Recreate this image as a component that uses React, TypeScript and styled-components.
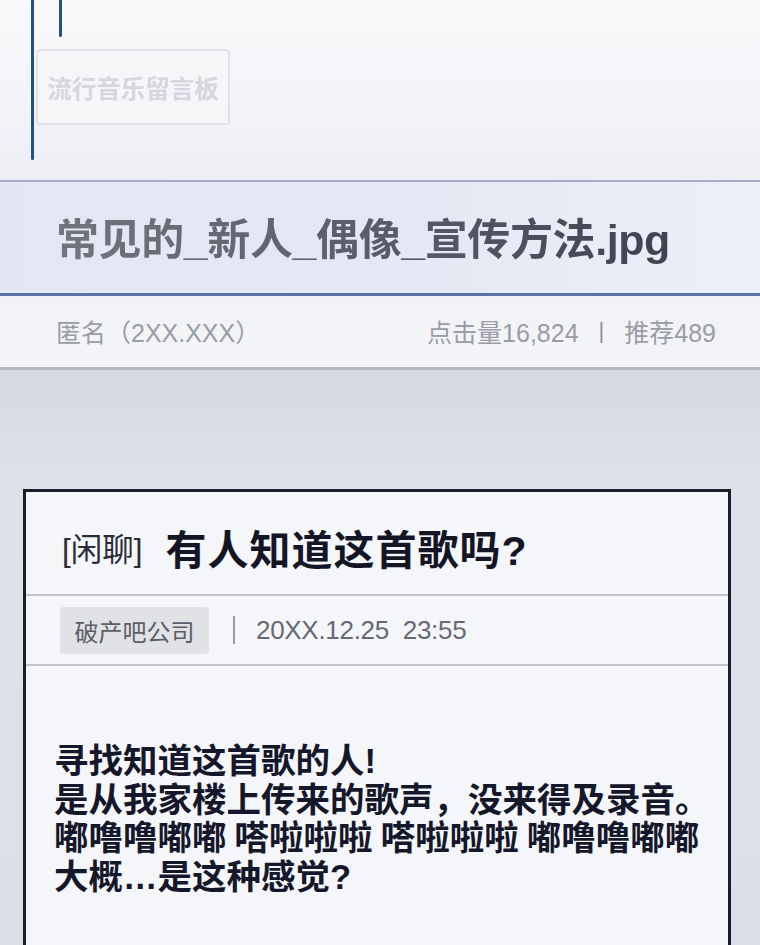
import React from 'react'
import styled, { createGlobalStyle } from 'styled-components'

const GlobalStyle = createGlobalStyle`
  html, body {
    margin: 0;
    padding: 0;
  }
  body {
    font-family: 'Liberation Sans', 'Noto Sans CJK SC', sans-serif;
  }
`

const Page = styled.div`
  width: 760px;
  height: 945px;
  overflow: hidden;
  background: linear-gradient(180deg, #d5d8e0 370px, #e0e2e9 490px, #dcdfe6 945px);
`

const Header = styled.header`
  position: relative;
  height: 180px;
  padding: 49px 0 0 36px;
  box-sizing: border-box;
  background: linear-gradient(180deg, #f9f9fb 0%, #f3f4f8 60%, #eceef4 100%);
`

const Rail = styled.span<{ $x: number; $len: number }>`
  position: absolute;
  top: 0;
  left: ${(p) => p.$x}px;
  width: 3px;
  height: ${(p) => p.$len}px;
  border-radius: 0 0 2px 2px;
  background: #24508a;
`

const BoardButton = styled.div`
  display: inline-flex;
  align-items: center;
  justify-content: center;
  width: 194px;
  height: 76px;
  box-sizing: border-box;
  border: 2px solid #e2e3ea;
  border-radius: 4px;
  background: #f6f6f9;
  color: #d5d6de;
  font-size: 24.5px;
  font-weight: 700;
`

const TitleBar = styled.div`
  display: flex;
  align-items: center;
  height: 116px;
  box-sizing: border-box;
  padding: 0 0 4px 56px;
  border-top: 2px solid #a5acca;
  border-bottom: 3px solid #5e70a6;
  background: linear-gradient(90deg, #e2e7f3 0%, #e3e8f4 55%, #edf0f7 100%);
`

const FileTitle = styled.h1`
  margin: 0;
  font-size: 43px;
  font-weight: 700;
  letter-spacing: -0.4px;
  background: linear-gradient(90deg, #72757f 0%, #585b68 55%, #3f4252 100%);
  -webkit-background-clip: text;
  background-clip: text;
  color: transparent;
`

const InfoRow = styled.div`
  display: flex;
  align-items: center;
  justify-content: space-between;
  height: 74px;
  box-sizing: border-box;
  padding: 0 44px 2px 56px;
  border-bottom: 3px solid #b5b8c1;
  background: linear-gradient(180deg, #f1f2f6, #f4f5f8);
  color: #9a9ca6;
  font-size: 25px;
`

const Stats = styled.div`
  display: flex;
  align-items: center;
  gap: 20px;
`

const Divider = styled.span`
  color: #8c8e98;
  font-size: 22px;
`

const Card = styled.article`
  margin: 119px 29px 0 23px;
  border: 3px solid #1b1d2f;
  border-bottom: none;
  background: #f5f6fa;
  height: 600px;
`

const CardHead = styled.div`
  display: flex;
  align-items: center;
  gap: 23px;
  height: 104px;
  box-sizing: border-box;
  padding: 8px 0 0 36px;
  border-bottom: 2px solid #c3c5cc;
`

const Category = styled.span`
  color: #2a2c38;
  font-size: 31.5px;
  font-weight: 400;
`

const PostTitle = styled.h2`
  margin: 0;
  color: #141626;
  font-size: 41px;
  font-weight: 700;
  letter-spacing: 1px;
`

const CardMeta = styled.div`
  display: flex;
  align-items: center;
  height: 70px;
  box-sizing: border-box;
  padding: 0 0 0 34px;
  border-bottom: 2px solid #c3c5cc;
`

const Tag = styled.span`
  display: inline-flex;
  align-items: center;
  justify-content: center;
  width: 149px;
  height: 47px;
  border-radius: 3px;
  background: #e1e2e6;
  color: #5b5d68;
  font-size: 24px;
`

const MetaBar = styled.span`
  width: 2px;
  height: 28px;
  margin: 0 21px 0 24px;
  background: #9a9ca4;
`

const Stamp = styled.span`
  color: #676974;
  font-size: 26px;
  white-space: pre;
  letter-spacing: -0.3px;
`

const CardBody = styled.div`
  padding: 76px 0 0 28px;
  color: #15172a;
  font-size: 34.5px;
  font-weight: 700;
  line-height: 38.5px;
  word-spacing: -1.5px;
`

const Line = styled.p`
  margin: 0;
  white-space: pre;
`

const body = [
  '寻找知道这首歌的人!',
  '是从我家楼上传来的歌声，没来得及录音。',
  '嘟噜噜嘟嘟 嗒啦啦啦 嗒啦啦啦 嘟噜噜嘟嘟',
  '大概…是这种感觉?',
]

export default function App() {
  return (
    <>
      <GlobalStyle />
      <Page>
        <Header>
          <Rail $x={31} $len={160} />
          <Rail $x={59} $len={37} />
          <BoardButton>流行音乐留言板</BoardButton>
        </Header>
        <TitleBar>
          <FileTitle>常见的_新人_偶像_宣传方法.jpg</FileTitle>
        </TitleBar>
        <InfoRow>
          <span>匿名（2XX.XXX）</span>
          <Stats>
            <span>点击量16,824</span>
            <Divider>|</Divider>
            <span>推荐489</span>
          </Stats>
        </InfoRow>
        <Card>
          <CardHead>
            <Category>[闲聊]</Category>
            <PostTitle>有人知道这首歌吗?</PostTitle>
          </CardHead>
          <CardMeta>
            <Tag>破产吧公司</Tag>
            <MetaBar />
            <Stamp>20XX.12.25  23:55</Stamp>
          </CardMeta>
          <CardBody>
            {body.map((line, i) => (
              <Line key={i}>{line}</Line>
            ))}
          </CardBody>
        </Card>
      </Page>
    </>
  )
}
